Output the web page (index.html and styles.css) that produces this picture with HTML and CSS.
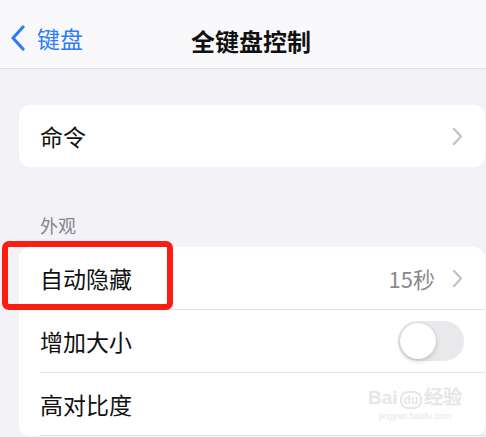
FILE: index.html
```html
<!DOCTYPE html>
<html lang="zh-CN">
<head>
<meta charset="utf-8">
<title>全键盘控制</title>
<link rel="stylesheet" href="styles.css">
</head>
<body>
<div class="screen">
  <header class="nav">
    <div class="back">
      <svg class="back-icon" width="16" height="26" viewBox="0 0 16 26"><path d="M13 2 L3 13 L13 24" fill="none" stroke="#2f7cf6" stroke-width="3.2" stroke-linecap="round" stroke-linejoin="round"/></svg>
      <span class="back-text">键盘</span>
    </div>
    <h1 class="title">全键盘控制</h1>
  </header>

  <section class="card card-first">
    <div class="row">
      <span class="label">命令</span>
      <span class="right"><svg class="chev" width="11" height="19" viewBox="0 0 11 19"><path d="M2 2 L9 9.5 L2 17" fill="none" stroke="#c3c3c8" stroke-width="2.4" stroke-linecap="round" stroke-linejoin="round"/></svg></span>
    </div>
  </section>

  <div class="section-title">外观</div>

  <section class="card">
    <div class="row">
      <span class="label">自动隐藏</span>
      <span class="right"><span class="value">15秒</span><svg class="chev" width="11" height="19" viewBox="0 0 11 19"><path d="M2 2 L9 9.5 L2 17" fill="none" stroke="#c3c3c8" stroke-width="2.4" stroke-linecap="round" stroke-linejoin="round"/></svg></span>
    </div>
    <div class="row">
      <span class="label">增加大小</span>
      <span class="right"><span class="toggle"><span class="knob"></span></span></span>
    </div>
    <div class="row">
      <span class="label">高对比度</span>
    </div>
  </section>

  <div class="highlight"></div>
  <div class="watermark">
    <div class="wm-top">Bai<span class="wm-du">du</span>经验</div>
    <div class="wm-url">jingyan.baidu.com</div>
  </div>
</div>
</body>
</html>
```

FILE: styles.css
```css
* { box-sizing: border-box; margin: 0; padding: 0; }
html, body { width: 486px; height: 437px; overflow: hidden; }
body {
  background: #f2f2f7;
  font-family: "Noto Sans CJK SC", "Noto Sans", sans-serif;
  color: #111;
}
.screen { position: relative; width: 486px; height: 437px; }

.nav {
  height: 69px;
  background: #f9f9fb;
  border-bottom: 1px solid #dedee2;
  display: flex;
  align-items: center;
  position: relative;
  padding-top: 8px;
}
.back {
  display: flex;
  align-items: center;
  gap: 11px;
  padding-left: 10px;
}
.back-icon { display: block; }
.back-text { color: #2f7cf6; font-size: 23px; line-height: 1; }
.title {
  position: absolute;
  left: 0; right: 0;
  top: 29px;
  text-align: center;
  font-size: 24px;
  font-weight: 700;
  line-height: 1;
  padding-left: 16px;
  pointer-events: none;
}

.card {
  background: #fff;
  border-radius: 11px;
  margin: 0 1px 0 19px;
  padding-left: 21px;
}
.card-first { margin-top: 36px; }

.row {
  height: 63px;
  display: flex;
  align-items: center;
  justify-content: space-between;
  padding-right: 22px;
  border-bottom: 1px solid #e2e2e6;
}
.card-first .row { height: 62px; border-bottom: none; }
.label { font-size: 23px; line-height: 1; color: #111; }
.right { display: flex; align-items: center; gap: 17px; }
.value { font-size: 22px; color: #8a8a8e; line-height: 1; }
.chev { display: block; }

.section-title {
  font-size: 18px;
  color: #85858a;
  padding: 49px 0 13px 40px;
  line-height: 1;
}

.toggle {
  width: 66px; height: 40px;
  border-radius: 20px;
  background: #e9e9eb;
  display: block;
  position: relative;
  margin-right: -1px;
}
.knob {
  position: absolute;
  left: 2px; top: 2px;
  width: 36px; height: 36px;
  border-radius: 50%;
  background: #fff;
  box-shadow: 0 2px 5px rgba(0,0,0,0.18), 0 0 1px rgba(0,0,0,0.15);
}

.highlight {
  position: absolute;
  left: 2px; top: 241px;
  width: 171px; height: 69px;
  border: 6px solid #fb1d12;
  border-radius: 7px;
}

.watermark {
  position: absolute;
  left: 368px; top: 388px;
  color: #e6e6e8;
  font-family: "Liberation Sans", sans-serif;
  text-align: center;
  line-height: 1;
}
.wm-top { font-size: 19px; font-weight: 700; }
.wm-du { font-size: 12px; border: 2px solid #e6e6e8; border-radius: 8px; padding: 0 2px; margin: 0 2px; }
.wm-url { font-size: 9px; margin-top: 5px; }
```
